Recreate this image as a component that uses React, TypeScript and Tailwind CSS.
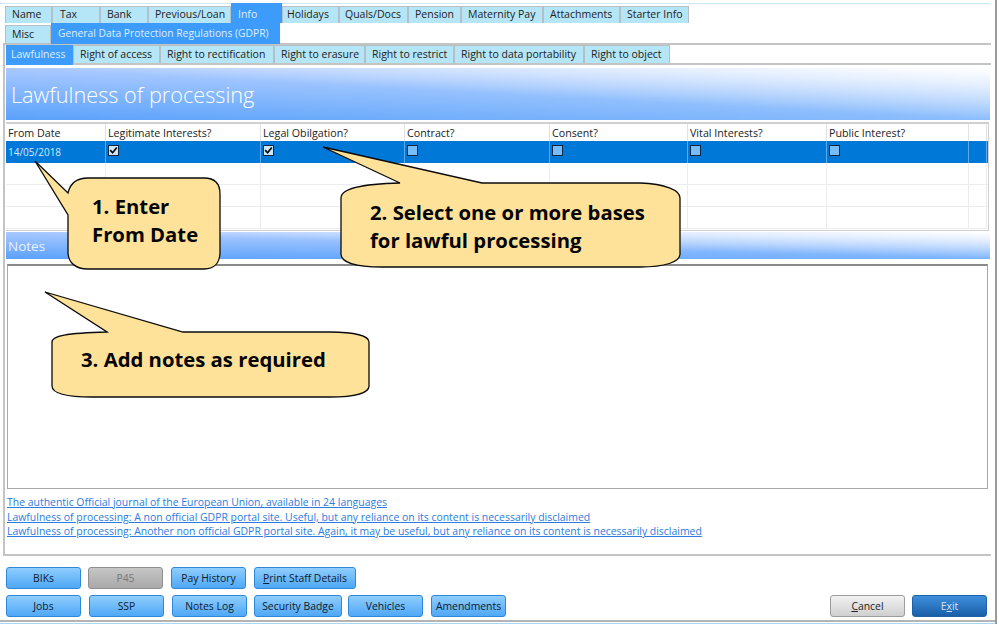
const font = "font-['Open_Sans','Noto_Sans',sans-serif]";

const topTabs = [
  { label: "Name", w: "w-[47px]" },
  { label: "Tax", w: "w-[48px]", pad: "pl-[7px]" },
  { label: "Bank", w: "w-[48px]" },
  { label: "Previous/Loan", w: "w-[83px]" },
  { label: "Info", w: "w-[51px]", active: true },
  { label: "Holidays", w: "w-[57px]", pad: "pl-[4px]" },
  { label: "Quals/Docs", w: "w-[69px]", pad: "pl-[5px]" },
  { label: "Pension", w: "w-[53px]" },
  { label: "Maternity Pay", w: "w-[82px]" },
  { label: "Attachments", w: "w-[77px]" },
  { label: "Starter Info", w: "w-[69px]" },
];

const subTabs = [
  { label: "Lawfulness", w: "w-[67px]", active: true },
  { label: "Right of access", w: "w-[87px]" },
  { label: "Right to rectification", w: "w-[114px]" },
  { label: "Right to erasure", w: "w-[91px]" },
  { label: "Right to restrict", w: "w-[89px]" },
  { label: "Right to data portability", w: "w-[130px]" },
  { label: "Right to object", w: "w-[86px]" },
];

const columns = ["From Date", "Legitimate Interests?", "Legal Obilgation?", "Contract?", "Consent?", "Vital Interests?", "Public Interest?", ""];
const gridCols = "grid grid-cols-[100px_155px_144px_145px_138px_139px_142px_18px]";

const Tab = ({ label, w, active, pad, sub }: { label: string; w: string; active?: boolean; pad?: string; sub?: boolean }) => {
  if (active) {
    return (
      <div className={`${w} h-[20px] bg-[#3d9bfb] text-[#dcefff] text-[10.5px] ${sub ? "-mb-[2px] pl-[5px] leading-[18px]" : "pl-[7px] leading-[22px]"}`}>
        {label}
      </div>
    );
  }
  return (
    <div className={`${w} ${sub ? "h-[18px] leading-[16px]" : "h-[17px] leading-[15px]"} bg-[#b5e6f7] border border-[#b4c0c6] border-b-0 text-[#222] ${pad ?? "pl-[6px]"} text-[10.5px]`}>
      {label}
    </div>
  );
};

const Check = ({ on }: { on: boolean }) => (
  <svg width="11" height="11" viewBox="0 0 11 11" className="block mt-[4px]">
    <rect x="0.5" y="0.5" width="10" height="10" fill={on ? "#cfe6fb" : "#78bdfb"} stroke="#10263f" />
    {on && <path d="M2.2 5.2 L4.6 7.8 L8.8 2.4" fill="none" stroke="#0a0a0a" strokeWidth="1.7" />}
  </svg>
);

const Btn = ({ label, w, disabled, u }: { label: string; w: string; disabled?: boolean; u?: boolean }) => (
  <div
    className={`${w} h-[22px] rounded-[3px] border text-center text-[10.4px] leading-[20px] ${
      disabled
        ? "border-[#8f8f8f] bg-[linear-gradient(#c6c6c6,#a9a9a9)] text-[#777]"
        : "border-[#2f87d8] bg-[linear-gradient(#8fcdfe,#4fa8f6)] text-[#10202e]"
    }`}
  >
    {u ? (
      <>
        <span className="underline">{label[0]}</span>
        {label.slice(1)}
      </>
    ) : (
      label
    )}
  </div>
);

const Callout = ({ d, left, top, lines }: { d: string; left: string; top: string; lines: string[] }) => (
  <>
    <svg width="999" height="627" viewBox="0 0 999 627" className="absolute left-0 top-0 pointer-events-none">
      <path d={d} fill="#fee299" stroke="#0b0b0b" strokeWidth="1.3" strokeLinejoin="miter" />
    </svg>
    <div className={`absolute ${left} ${top} text-[20.3px] leading-[28px] font-bold text-[#050505] whitespace-nowrap`}>
      {lines.map((l) => (
        <div key={l}>{l}</div>
      ))}
    </div>
  </>
);

export default function App() {
  return (
    <div className={`relative w-[999px] h-[627px] overflow-hidden bg-white ${font}`}>
      <div className="w-[997px] h-[624px] border-r-2 border-[#9a9a9a] flex flex-col">
        <div className="mt-[3px] w-[991px] h-px bg-[#cfe8f6]" />
        {/* main tabs */}
        <div className="pl-[5px] flex items-end h-[19px]">
          {topTabs.map((t) => (
            <Tab key={t.label} {...t} />
          ))}
        </div>
        <div className="pl-[5px] flex items-end h-[21px] relative z-10">
          <div className="w-[46px] h-[19px] bg-[#b5e6f7] border border-[#b4c0c6] text-[#222] pl-[6px] text-[10.5px] leading-[16px]">Misc</div>
          <div className="w-[229px] h-[21px] bg-[#3d9bfb] text-[#dcefff] pl-[7px] text-[10.3px] leading-[20px] whitespace-nowrap">
            General Data Protection Regulations (GDPR)
          </div>
        </div>

        {/* inner panel */}
        <div className="-mt-px ml-[3px] w-[988px] h-[513px] border-t-2 border-l-2 border-b-2 border-[#c4c4c4] flex flex-col pl-px">
          <div className="flex items-end h-[20px] border-b-2 border-[#c4c4c4] relative">
            {subTabs.map((t) => (
              <Tab key={t.label} {...t} sub />
            ))}
          </div>
          <div className="mt-[3px] w-[984px] h-[52px] bg-[linear-gradient(to_bottom_left,#ffffff,rgba(255,255,255,0)_50%),linear-gradient(to_right,rgba(255,255,255,0),rgba(255,255,255,0.3)),linear-gradient(#a9c9ff,#5aa1fb)] flex items-center pl-[5px] pt-[3px] text-[21.7px] text-white font-light">
            Lawfulness of processing
          </div>

          {/* grid */}
          <div className="mt-[2px] w-[983px] h-[109px] border border-[#d0d0d0] border-l-0 border-t-2 flex flex-col">
            <div className={`${gridCols} h-[17px] text-[10.7px] leading-[19px] text-[#222]`}>
              {columns.map((c, i) => (
                <div key={i} className="border-r border-[#e2e2e2] pl-[2px] whitespace-nowrap">
                  {c}
                </div>
              ))}
            </div>
            <div className={`${gridCols} h-[22px] bg-[#0078d7] text-[10px] leading-[22px] text-[#d5e8f8]`}>
              {columns.map((c, i) => (
                <div key={i} className="border-r border-[#5ea9e6] pl-[2px]">
                  {i === 0 ? "14/05/2018" : i < 7 ? <Check on={i < 3} /> : null}
                </div>
              ))}
            </div>
            {[0, 1, 2].map((r) => (
              <div key={r} className={`${gridCols} h-[22px] border-b border-[#ececec]`}>
                {columns.map((c, i) => (
                  <div key={i} className="border-r border-[#ececec]" />
                ))}
              </div>
            ))}
          </div>

          <div className="mt-px w-[984px] h-[27px] bg-[linear-gradient(to_bottom_left,#ffffff,rgba(255,255,255,0)_50%),linear-gradient(to_right,rgba(255,255,255,0),rgba(255,255,255,0.2)),linear-gradient(#a9c9ff,#5aa1fb)] pl-[2px] text-[13.5px] leading-[28px] text-[#e8f1ff]">Notes</div>

          {/* notes box */}
          <div className="mt-[5px] ml-px w-[981px] h-[225px] border border-[#a8a8a8] border-t-2 border-t-[#8a8a8a] bg-white" />

          {/* links */}
          <div className="mt-[6px] pl-[1px] flex flex-col text-[10.45px] leading-[14.5px] text-[#2c7be0] underline">
            <div>The authentic Official journal of the European Union, available in 24 languages</div>
            <div>Lawfulness of processing: A non official GDPR portal site. Useful, but any reliance on its content is necessarily disclaimed</div>
            <div>Lawfulness of processing: Another non official GDPR portal site. Again, it may be useful, but any reliance on its content is necessarily disclaimed</div>
          </div>
        </div>

        {/* bottom buttons */}
        <div className="mt-[11px] ml-[6px] flex gap-[7px]">
          <Btn label="BIKs" w="w-[75px]" />
          <Btn label="P45" w="w-[75px]" disabled />
          <Btn label="Pay History" w="w-[75px] ml-px" />
          <Btn label="Print Staff Details" w="w-[102px] ml-px" u />
        </div>
        <div className="mt-[6px] ml-[6px] flex">
          <div className="flex gap-[8px]">
            <Btn label="Jobs" w="w-[75px]" />
            <Btn label="SSP" w="w-[75px]" />
            <Btn label="Notes Log" w="w-[75px]" />
            <Btn label="Security Badge" w="w-[88px] ml-[-1px]" />
            <Btn label="Vehicles" w="w-[75px] ml-[-2px]" />
            <Btn label="Amendments" w="w-[75px]" />
          </div>
          <div className="ml-[324px] flex gap-[7px]">
            <div className="w-[75px] h-[22px] rounded-[3px] border border-[#9c9c9c] bg-[linear-gradient(#f2f2f2,#cfcfcf)] text-center text-[10.4px] leading-[20px] text-[#222]">
              <span className="underline">C</span>ancel
            </div>
            <div className="w-[75px] h-[22px] rounded-[3px] border border-[#1d62a8] bg-[linear-gradient(#3d8fdc,#1a5ea8)] text-center text-[10.4px] leading-[20px] text-[#cfe4f8]">
              E<span className="underline">x</span>it
            </div>
          </div>
        </div>
        <div className="mt-[3px] h-[2px] bg-[#b4b4b4]" />
        <div className="mt-px h-px bg-[#a9d8f5]" />
      </div>

      {/* callouts */}
      <Callout
        d="M35 161 L68 193 C70 184 76 178 88 178 L204 178 C215 178 220 184 220 194 L220 252 C220 263 214 269 204 269 L88 269 C76 269 68 263 68 252 L68 215 Z"
        left="left-[92px]"
        top="top-[192px]"
        lines={["1. Enter", "From Date"]}
      />
      <Callout
        d="M323 147 L482 183 L640 183 C665 184 680 190 680 198 L680 254 C680 262 665 267 640 267 L382 267 C355 267 341 262 341 254 L341 198 C341 190 355 184 400 183 Z"
        left="left-[370px]"
        top="top-[198px]"
        lines={["2. Select one or more bases", "for lawful processing"]}
      />
      <Callout
        d="M45 292 L183 332 L330 332 C355 332 369 336 369 342 L369 386 C369 393 355 397 330 397 L92 397 C66 397 52 393 52 386 L52 342 C52 336 66 333 107 332 Z"
        left="left-[81px]"
        top="top-[345px]"
        lines={["3. Add notes as required"]}
      />
    </div>
  );
}
